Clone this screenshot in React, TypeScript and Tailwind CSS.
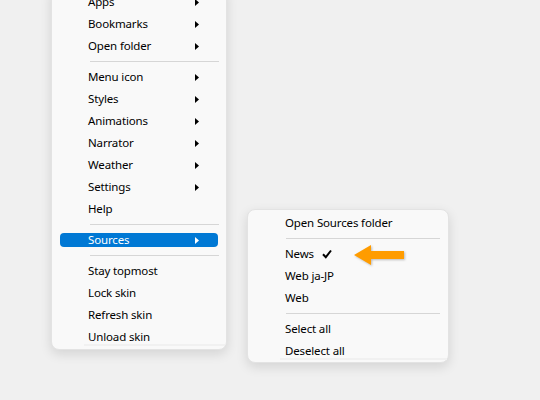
import React from "react";

const font = { fontFamily: '"Noto Sans", "Segoe UI", sans-serif' };

function Tri({ white }: { white?: boolean }) {
  return (
    <svg width="4" height="7" viewBox="0 0 4 7" className="shrink-0">
      <path d="M0 0 L4 3.5 L0 7 Z" fill={white ? "#ffffff" : "#000000"} />
    </svg>
  );
}

function Row({ label, sub, active }: { label: string; sub?: boolean; active?: boolean }) {
  if (active) {
    return (
      <div className="h-[22px] flex items-center px-[8px]">
        <div className="h-[14px] w-full rounded-[4px] bg-[#0078d4] flex items-center pl-[28px] pr-[19px] text-white">
          <span className="flex-1 leading-none">{label}</span>
          <Tri white />
        </div>
      </div>
    );
  }
  return (
    <div className="h-[22px] flex items-center pl-[36px] pr-[27px] text-black">
      <span className="flex-1 leading-none">{label}</span>
      {sub && <Tri />}
    </div>
  );
}

function Sep({ left, right }: { left: string; right: string }) {
  return (
    <div className={`h-[9px] flex items-center ${left} ${right}`}>
      <div className="h-px w-full bg-[#d6d6d6]" />
    </div>
  );
}

function SubRow({ label, check }: { label: string; check?: boolean }) {
  return (
    <div className="h-[22px] flex items-center pl-[37px] text-black">
      <span className="leading-none">{label}</span>
      {check && (
        <svg width="10" height="10" viewBox="0 0 10 10" className="ml-[8px]">
          <path d="M1 5.2 L3.8 8.2 L9 1.5" fill="none" stroke="#000" strokeWidth="2" strokeLinejoin="miter" />
        </svg>
      )}
    </div>
  );
}

export default function App() {
  return (
    <div
      className="relative w-[540px] h-[400px] overflow-hidden bg-[#f0f0f0] text-[11.5px] tracking-[-0.15px]"
      style={font}
    >
      <div className="flex items-start">
        <div className="relative -mt-[14px] ml-[51px] w-[176px] rounded-[8px] bg-[#f9f9f9] border border-[#e3e3e3] shadow-[0_4px_12px_rgba(0,0,0,0.12)] pt-[4px] pb-[3px]">
          <Row label="Apps" sub />
          <Row label="Bookmarks" sub />
          <Row label="Open folder" sub />
          <Sep left="pl-[38px]" right="pr-[7px]" />
          <Row label="Menu icon" sub />
          <Row label="Styles" sub />
          <Row label="Animations" sub />
          <Row label="Narrator" sub />
          <Row label="Weather" sub />
          <Row label="Settings" sub />
          <Row label="Help" />
          <Sep left="pl-[38px]" right="pr-[7px]" />
          <Row label="Sources" sub active />
          <Sep left="pl-[38px]" right="pr-[7px]" />
          <Row label="Stay topmost" />
          <Row label="Lock skin" />
          <Row label="Refresh skin" />
          <Row label="Unload skin" />
          <div className="-mt-[4px] ml-[32px] mr-[1px] h-[2px] bg-[#f1f1f1]" />
        </div>
        <div className="relative mt-[209px] ml-[20px] w-[202px] rounded-[8px] bg-[#f9f9f9] border border-[#e3e3e3] shadow-[0_4px_12px_rgba(0,0,0,0.12)] pt-[2px] pb-[2px]">
          <SubRow label="Open Sources folder" />
          <Sep left="pl-[38px]" right="pr-[8px]" />
          <SubRow label="News" check />
          <SubRow label="Web ja-JP" />
          <SubRow label="Web" />
          <Sep left="pl-[38px]" right="pr-[8px]" />
          <SubRow label="Select all" />
          <SubRow label="Deselect all" />
          <div className="-mt-[4px] ml-[32px] mr-[1px] h-[2px] bg-[#f1f1f1]" />
        </div>
      </div>
      <svg
        className="absolute left-[353px] top-[244px]"
        width="54"
        height="24"
        viewBox="0 0 54 24"
        style={{ filter: "drop-shadow(1px 1.5px 1px rgba(0,0,0,0.25))" }}
      >
        <path d="M1 11 L18 1 L18 7 L51 7 L51 15 L18 15 L18 21 Z" fill="#ff9c00" />
      </svg>
    </div>
  );
}
